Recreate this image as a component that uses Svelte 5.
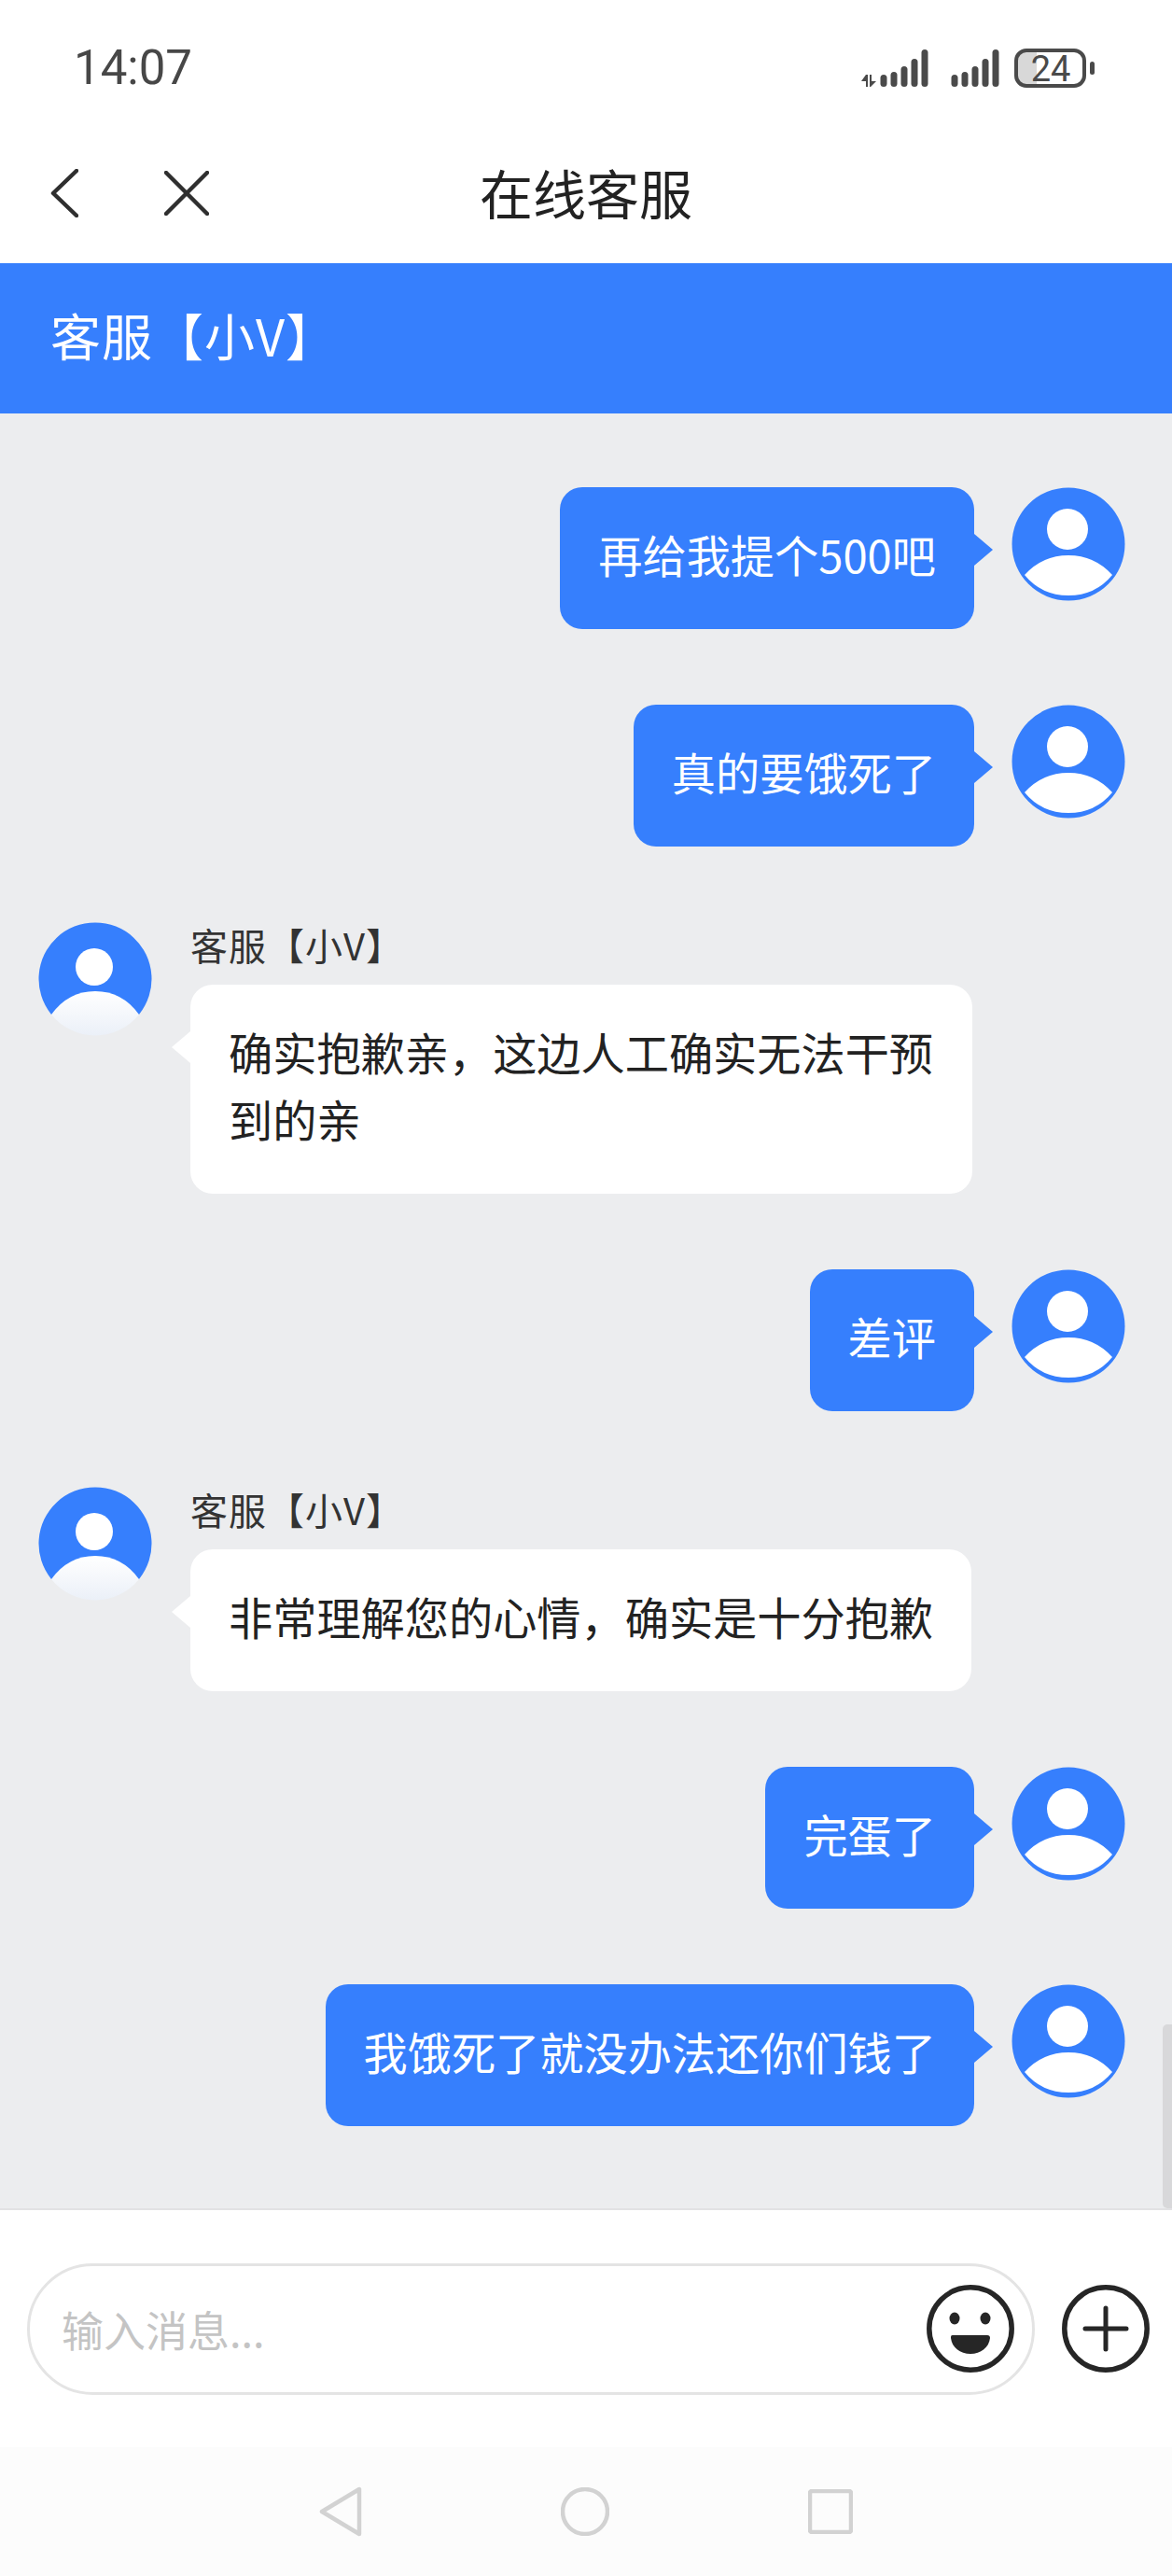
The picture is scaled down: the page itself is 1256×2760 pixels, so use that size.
<script>
	const messages = [
		{ mine: true, lines: '再给我提个500吧' },
		{ mine: true, lines: '真的要饿死了' },
		{ mine: false, lines: '确实抱歉亲，这边人工确实无法干预到的亲' },
		{ mine: true, lines: '差评' },
		{ mine: false, lines: '非常理解您的心情，确实是十分抱歉' },
		{ mine: true, lines: '完蛋了' },
		{ mine: true, lines: '我饿死了就没办法还你们钱了' }
	];
	const agentName = '客服【小V】';
	const bars = [
		[0, 31],
		[11, 28],
		[22, 22],
		[33, 14],
		[44, 4]
	];
</script>

{#snippet avatar(mine, i)}
	<svg class="avatar" viewBox="0 0 122 122" aria-hidden="true">
		{#if mine}
			<circle cx="61" cy="61" r="60.5" fill="#367ffd" />
			<circle cx="60" cy="45" r="22" fill="#fff" />
			<path d="M14 94Q33 73 61 73Q89 73 108 94Q90 116 61 116Q32 116 14 94Z" fill="#fff" />
		{:else}
			<defs>
				<linearGradient id="fade-{i}" x1="0" y1="0" x2="0" y2="1">
					<stop offset="0" stop-color="#fff" />
					<stop offset="1" stop-color="#ebf0f8" />
				</linearGradient>
			</defs>
			<path d="M14 99A60.5 60.5 0 1 1 108 99Z" fill="#367ffd" />
			<circle cx="60" cy="48" r="20" fill="#fff" />
			<path d="M14 99Q32 74 61 74Q90 74 108 99A60.5 60.5 0 0 1 14 99Z" fill="url(#fade-{i})" />
		{/if}
	</svg>
{/snippet}

<div class="page">
	<div class="statusbar">
		<span class="time">14:07</span>
		<svg class="status-icons" width="254" height="48" viewBox="0 0 254 48" aria-hidden="true">
			<path d="M2 38L7 31H9V44H7V38ZM11 31H13V38H18L12 44H11Z" />
			{#each bars as [x, y]}
				<rect x={x + 22.5} {y} width="7" height={44 - y} rx="3.5" />
				<rect x={x + 98.5} {y} width="7" height={44 - y} rx="3.5" />
			{/each}
			<path d="M190 5H179A11 11 0 0 0 168 16V32A11 11 0 0 0 179 43H190Z" fill="#d8d8d8" />
			<rect x="168" y="5" width="73" height="38" rx="11" fill="none" stroke="#4a4a4a" stroke-width="4" />
			<rect x="247" y="17" width="5" height="14" rx="2.5" />
			<text x="205" y="38" text-anchor="middle">24</text>
		</svg>
	</div>

	<nav class="navbar">
		<svg class="nav-back" width="30" height="52" viewBox="0 0 30 52" aria-hidden="true">
			<path d="M28 2L3 26L28 50" />
		</svg>
		<svg class="nav-close" width="48" height="48" viewBox="0 0 48 48" aria-hidden="true">
			<path d="M2 2L46 46M46 2L2 46" />
		</svg>
		<h1>在线客服</h1>
	</nav>

	<header class="agent-bar">{agentName}</header>

	<main class="chat">
		{#each messages as msg, i}
			{#if msg.mine}
				<div class="row mine">
					<div class="bubble">{msg.lines}</div>
					{@render avatar(true, i)}
				</div>
			{:else}
				<div class="row agent">
					{@render avatar(false, i)}
					<div class="agent-body">
						<div class="name">{agentName}</div>
						<div class="bubble">{msg.lines}</div>
					</div>
				</div>
			{/if}
		{/each}
		<div class="scrollbar"></div>
	</main>

	<footer class="composer">
		<div class="input-wrap">
			<input type="text" placeholder="输入消息..." />
			<svg class="round-icon" viewBox="0 0 94 94" aria-hidden="true">
				<circle cx="47" cy="47" r="44.2" class="ring" />
				<ellipse cx="30" cy="36" rx="5.5" ry="6.5" />
				<ellipse cx="63" cy="36" rx="5.5" ry="6.5" />
				<path d="M28 54H65C67 54 68 55 68 57C67 67 58 74 47 74C36 74 27 67 26 57C26 55 26 54 28 54Z" />
			</svg>
		</div>
		<svg class="round-icon" viewBox="0 0 94 94" aria-hidden="true">
			<circle cx="47" cy="47" r="44.2" class="ring" />
			<path d="M25 47H69M47 25V69" class="plus" />
		</svg>
	</footer>

	<div class="sysnav">
		<svg width="46" height="54" viewBox="0 0 46 54" aria-hidden="true">
			<path d="M43 3V51L3 27Z" />
		</svg>
		<svg width="52" height="52" viewBox="0 0 52 52" aria-hidden="true">
			<circle cx="26" cy="26" r="24" />
		</svg>
		<svg width="48" height="48" viewBox="0 0 48 48" aria-hidden="true">
			<rect x="2" y="2" width="44" height="44" rx="2" />
		</svg>
	</div>
</div>

<style>
	:global(body) {
		margin: 0;
	}

	.page {
		display: flex;
		flex-direction: column;
		width: 1256px;
		height: 2760px;
		background: #fff;
		font-family: 'Noto Sans CJK SC', 'Noto Sans', sans-serif;
		overflow: hidden;
	}

	.statusbar {
		display: flex;
		flex: none;
		align-items: center;
		justify-content: space-between;
		box-sizing: border-box;
		height: 140px;
		padding: 5px 81px 0 79px;
	}

	.time {
		font-family: Roboto, sans-serif;
		font-size: 51px;
		line-height: 60px;
		color: #474747;
	}

	.status-icons {
		fill: #4a4a4a;
	}

	.status-icons text {
		font-family: Roboto, sans-serif;
		font-size: 38px;
	}

	.navbar {
		position: relative;
		display: flex;
		flex: none;
		align-items: center;
		box-sizing: border-box;
		height: 142px;
		padding: 0 0 8px 54px;
	}

	.navbar svg {
		flex: none;
		fill: none;
		stroke: #2f2f2f;
		stroke-width: 4.5;
		stroke-linecap: round;
		stroke-linejoin: round;
	}

	.nav-close {
		margin-left: 92px;
	}

	.navbar h1 {
		position: absolute;
		top: 0;
		left: 0;
		right: 0;
		margin: 0;
		font-size: 57px;
		font-weight: 400;
		line-height: 130px;
		text-align: center;
		color: #222;
	}

	.agent-bar {
		flex: none;
		box-sizing: border-box;
		height: 161px;
		padding-left: 54px;
		font-size: 54px;
		letter-spacing: 1px;
		line-height: 154px;
		color: #fff;
		background: #367ffd;
	}

	.chat {
		position: relative;
		display: flex;
		flex: 1;
		flex-direction: column;
		gap: 81px;
		padding-top: 79px;
		background: #ecedef;
		border-bottom: 2px solid #e2e2e4;
	}

	.row {
		display: flex;
		align-items: flex-start;
	}

	.row.mine {
		justify-content: flex-end;
		gap: 40px;
		padding-right: 50px;
	}

	.row.agent {
		gap: 41px;
		padding-left: 41px;
	}

	.avatar {
		flex: none;
		width: 122px;
		height: 122px;
	}

	.name {
		margin-bottom: 19px;
		font-size: 40px;
		letter-spacing: 1px;
		line-height: 48px;
		color: #333;
	}

	.bubble {
		position: relative;
		box-sizing: border-box;
		max-width: 838px;
		padding: 36px 41px 44px;
		font-size: 47.2px;
		line-height: 72px;
		border-radius: 24px;
	}

	.bubble::after {
		content: '';
		position: absolute;
		top: 50px;
		width: 20px;
		height: 34px;
	}

	.mine .bubble {
		color: #fff;
		background: #367ffd;
	}

	.mine .bubble::after {
		left: 100%;
		background: #367ffd;
		clip-path: polygon(0 0, 100% 50%, 0 100%);
	}

	.agent .bubble {
		color: #222;
		background: #fff;
	}

	.agent .bubble::after {
		right: 100%;
		background: #fff;
		clip-path: polygon(100% 0, 0 50%, 100% 100%);
	}

	.scrollbar {
		position: absolute;
		right: 0;
		bottom: 0;
		width: 10px;
		height: 197px;
		background: #d8d8da;
		border-radius: 5px 0 0 5px;
	}

	.composer {
		display: flex;
		flex: none;
		align-items: center;
		gap: 29px;
		box-sizing: border-box;
		height: 254px;
		padding: 0 24px 0 29px;
	}

	.input-wrap {
		display: flex;
		flex: 1;
		align-items: center;
		box-sizing: border-box;
		height: 141px;
		padding: 0 19px 0 34px;
		border: 3px solid #e4e4e4;
		border-radius: 71px;
	}

	.input-wrap input {
		flex: 1;
		min-width: 0;
		padding: 0;
		font: inherit;
		font-size: 45px;
		background: transparent;
		border: none;
		outline: none;
	}

	.input-wrap input::placeholder {
		color: #c4c4c4;
	}

	.round-icon {
		flex: none;
		width: 94px;
		height: 94px;
		fill: #262626;
	}

	.ring {
		fill: none;
		stroke: #262626;
		stroke-width: 5.5;
	}

	.plus {
		fill: none;
		stroke: #262626;
		stroke-width: 5;
		stroke-linecap: round;
	}

	.sysnav {
		display: flex;
		flex: none;
		align-items: center;
		justify-content: center;
		gap: 213px;
		height: 138px;
		background: #fcfcfc;
	}

	.sysnav svg {
		fill: none;
		stroke: #d2d2d2;
		stroke-width: 4.5;
		stroke-linejoin: round;
	}
</style>
